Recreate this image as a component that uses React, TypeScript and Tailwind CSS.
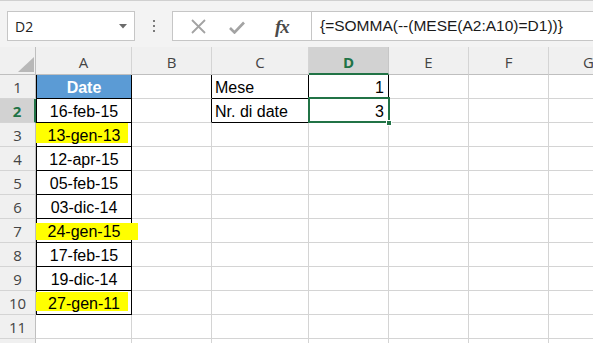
import React from "react";

type Row = {
  n: number;
  a?: string;
  c?: string;
  d?: string;
  hl?: string;
};

const rows: Row[] = [
  { n: 1, a: "Date", c: "Mese", d: "1" },
  { n: 2, a: "16-feb-15", c: "Nr. di date", d: "3" },
  { n: 3, a: "13-gen-13", hl: "left-[-1px] top-0 w-[92px] h-[20px]" },
  { n: 4, a: "12-apr-15" },
  { n: 5, a: "05-feb-15" },
  { n: 6, a: "03-dic-14" },
  { n: 7, a: "24-gen-15", hl: "left-[-1px] top-[4px] w-[102px] h-[17px]" },
  { n: 8, a: "17-feb-15" },
  { n: 9, a: "19-dic-14" },
  { n: 10, a: "27-gen-11", hl: "left-[-1px] top-[1px] w-[92px] h-[19px]" },
  { n: 11 },
  { n: 12 },
];

const cols = ["A", "B", "C", "D", "E", "F", "G"];

const cellFont = { fontFamily: '"Liberation Sans", Arial, sans-serif' };
const uiFont = { fontFamily: '"Open Sans", "Noto Sans", sans-serif' };

function Toolbar() {
  return (
    <div className="h-[47px] bg-[#f3f3f3] border-t border-[#d0d0d0] flex items-start pt-[10px]" style={uiFont}>
      <div className="ml-[7px] w-[128px] h-[30px] shrink-0 bg-white border border-[#c6c6c6] flex items-center justify-between pl-[7px] pr-[7px]">
        <span className="text-[14px] text-[#222] leading-none pt-[1px]">D2</span>
        <svg width="8" height="5" viewBox="0 0 8 5">
          <path d="M0 0 H8 L4 4.5 Z" fill="#6b6b6b" />
        </svg>
      </div>
      <div className="w-[37px] h-[30px] shrink-0 flex flex-col items-center justify-center gap-[3px]">
        <span className="w-[2px] h-[2px] bg-[#7a7a7a]" />
        <span className="w-[2px] h-[2px] bg-[#7a7a7a]" />
        <span className="w-[2px] h-[2px] bg-[#7a7a7a]" />
      </div>
      <div className="w-[440px] h-[30px] bg-white border border-[#c6c6c6] flex shrink-0">
        <div className="w-[139px] h-full shrink-0 border-r border-[#c6c6c6] flex items-center">
          <svg className="ml-[18px]" width="15" height="15" viewBox="0 0 15 15">
            <path d="M1 1 L14 14 M14 1 L1 14" stroke="#a3a3a3" strokeWidth="1.8" fill="none" />
          </svg>
          <svg className="ml-[23px] mt-[2px]" width="16" height="13" viewBox="0 0 16 13">
            <path d="M1 7 L5.5 11.5 L15 1.5" stroke="#a3a3a3" strokeWidth="2.6" fill="none" />
          </svg>
          <span
            className="ml-[30px] text-[19px] italic font-bold text-[#4a4a4a] leading-none tracking-[-1px]"
            style={{ fontFamily: '"Liberation Serif", "Times New Roman", serif' }}
          >
            fx
          </span>
        </div>
        <div className="flex-1 flex items-center pl-[8px] text-[15.5px] text-[#1a1a1a] whitespace-nowrap" style={cellFont}>
          {"{=SOMMA(--(MESE(A2:A10)=D1))}"}
        </div>
      </div>
    </div>
  );
}

function HeaderRow() {
  return (
    <>
      <div className="h-[28px] bg-[#f0f0f0] border-r border-b border-[#bfbfbf] flex items-end justify-end pr-[1px] pb-[2px]">
        <svg width="16" height="15" viewBox="0 0 16 15">
          <path d="M16 0 V15 H0 Z" fill="#b8b8b8" />
        </svg>
      </div>
      {cols.map((c) => {
        const sel = c === "D";
        return (
          <div
            key={c}
            className={
              sel
                ? "h-[28px] bg-[#d2d2d2] border-r border-[#c6c6c6] border-b-2 border-b-[#217346] flex items-center justify-center pt-[4px] text-[15px] font-bold text-[#217346]"
                : "h-[28px] bg-[#f0f0f0] border-r border-[#d4d4d4] border-b border-b-[#bfbfbf] flex items-center justify-center pt-[4px] text-[15px] text-[#444]"
            }
            style={uiFont}
          >
            {c}
          </div>
        );
      })}
    </>
  );
}

function DataRow({ row }: { row: Row }) {
  const inA = row.n <= 10;
  const inCD = row.n <= 2;
  const selRow = row.n === 2;
  return (
    <>
      <div
        className={
          selRow
            ? "h-[24px] bg-[#d2d2d2] border-b border-[#d4d4d4] border-r-2 border-r-[#217346] flex items-center justify-center pt-[2px] text-[15px] font-bold text-[#217346]"
            : "h-[24px] bg-[#f0f0f0] border-b border-[#d4d4d4] border-r border-r-[#bfbfbf] flex items-center justify-center pt-[2px] text-[15px] text-[#444]"
        }
        style={uiFont}
      >
        {row.n <= 11 ? row.n : null}
      </div>
      {/* A */}
      <div
        className={
          inA
            ? row.n === 1
              ? "relative h-[24px] border-l border-r border-b border-black bg-[#5b9bd5] text-white font-bold text-center leading-[21px] pt-[2px] text-[16px]"
              : "relative h-[24px] border-l border-r border-b border-black text-black text-center leading-[21px] pt-[2px] text-[16px]"
            : "h-[24px] border-r border-b border-[#d4d4d4]"
        }
        style={cellFont}
      >
        {row.hl && <span className={`absolute bg-[#ffff00] ${row.hl}`} />}
        <span className="relative">{row.a}</span>
      </div>
      {/* B */}
      <div className={inCD ? "h-[24px] border-b border-[#d4d4d4] border-r border-r-black" : "h-[24px] border-r border-b border-[#d4d4d4]"} />
      {/* C */}
      <div
        className={
          inCD
            ? "h-[24px] border-r border-b border-black pl-[3px] leading-[21px] pt-[2px] text-[16px] text-black whitespace-nowrap"
            : "h-[24px] border-r border-b border-[#d4d4d4]"
        }
        style={cellFont}
      >
        {row.c}
      </div>
      {/* D */}
      <div
        className={
          inCD
            ? "relative h-[24px] border-r border-b border-black pr-[4px] text-right leading-[21px] pt-[2px] text-[16px] text-black"
            : "h-[24px] border-r border-b border-[#d4d4d4]"
        }
        style={cellFont}
      >
        {row.d}
        {selRow && (
          <>
            <span className="absolute left-[-1px] top-[-2px] right-[-2px] bottom-[-1px] border-2 border-[#217346]" />
            <span className="absolute right-[-4px] bottom-[-4px] w-[6px] h-[6px] bg-[#217346] border border-white" />
          </>
        )}
      </div>
      <div className="h-[24px] border-r border-b border-[#d4d4d4]" />
      <div className="h-[24px] border-r border-b border-[#d4d4d4]" />
      <div className="h-[24px] border-r border-b border-[#d4d4d4]" />
    </>
  );
}

export default function App() {
  return (
    <div className="w-[593px] h-[343px] overflow-hidden bg-white">
      <Toolbar />
      <div className="grid grid-cols-[36px_96px_80px_97px_80px_80px_80px_80px]">
        <HeaderRow />
        {rows.map((r) => (
          <DataRow key={r.n} row={r} />
        ))}
      </div>
    </div>
  );
}
